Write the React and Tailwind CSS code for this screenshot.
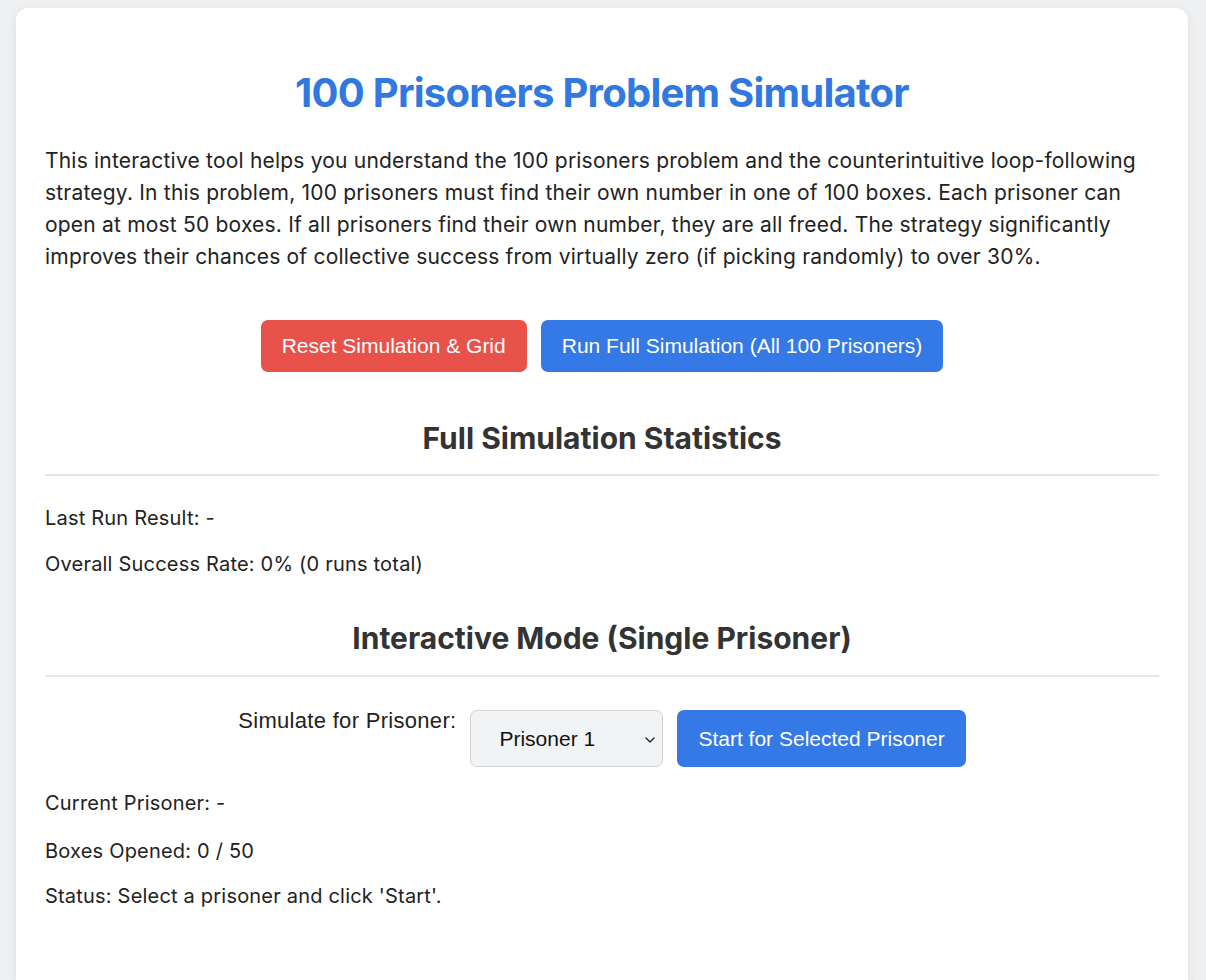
import React from "react";

export default function App() {
  const body = { fontFamily: "Inter, 'Noto Sans', sans-serif" };
  const btn = { fontFamily: "'Liberation Sans', Arial, sans-serif" };
  return (
    <div className="min-h-[980px] bg-[#eef0f2] pt-2 pl-4" style={body}>
      <div className="w-[1172px] bg-white rounded-xl shadow-[0_2px_10px_rgba(0,0,0,0.08)] px-[29px] pt-[61px] pb-[80px] text-[#222]">
        <h1 className="text-center text-[40px] leading-[48px] font-bold text-[#3178e0] tracking-[-0.75px]">
          100 Prisoners Problem Simulator
        </h1>
        <p className="mt-[28px] text-[21px] leading-[32px] tracking-[0.2px] text-[#222] whitespace-nowrap">
          This interactive tool helps you understand the 100 prisoners problem and the counterintuitive loop-following<br />
          strategy. In this problem, 100 prisoners must find their own number in one of 100 boxes. Each prisoner can<br />
          open at most 50 boxes. If all prisoners find their own number, they are all freed. The strategy significantly<br />
          improves their chances of collective success from virtually zero (if picking randomly) to over 30%.
        </p>
        <div className="mt-[47px] flex justify-center gap-[14px]" style={btn}>
          <button className="h-[52px] px-[21px] rounded-[7px] bg-[#e8524a] text-white text-[21px]">
            Reset Simulation &amp; Grid
          </button>
          <button className="h-[52px] px-[21px] rounded-[7px] bg-[#3479e6] text-white text-[21px]">
            Run Full Simulation (All 100 Prisoners)
          </button>
        </div>
        <h2 className="mt-[48px] text-center text-[30px] leading-[36px] font-bold text-[#333] pb-[18px] border-b-2 border-[#e6e6e6]">
          Full Simulation Statistics
        </h2>
        <div className="mt-[26px] text-[20px] leading-[32px] tracking-[0.2px] flex flex-col gap-[14px]">
          <div>Last Run Result: -</div>
          <div>Overall Success Rate: 0% (0 runs total)</div>
        </div>
        <h2 className="mt-[40px] text-center text-[30px] leading-[36px] font-bold text-[#333] pb-[19px] border-b-2 border-[#e6e6e6]">
          Interactive Mode (Single Prisoner)
        </h2>
        <div className="mt-[33px] flex justify-center items-start gap-[14px]">
          <span className="text-[22px] leading-[22px] tracking-[0.3px] text-[#222]" style={btn}>Simulate for Prisoner:</span>
          <div className="relative w-[193px] h-[57px] rounded-[7px] border border-[#cfd3d6] bg-[#f1f3f5] flex items-center pl-[28px]" style={btn}>
            <span className="text-[21px] text-[#111]">Prisoner 1</span>
            <svg className="absolute right-[6px] top-[23px]" width="12" height="12" viewBox="0 0 12 12" fill="none">
              <path d="M2 4 L6 8 L10 4" stroke="#222" strokeWidth="1.4" strokeLinecap="round" strokeLinejoin="round" />
            </svg>
          </div>
          <button className="h-[57px] px-[21px] rounded-[7px] bg-[#3479e6] text-white text-[21px]" style={btn}>
            Start for Selected Prisoner
          </button>
        </div>
        <div className="mt-[20px] text-[20px] leading-[32px] tracking-[0.2px] flex flex-col">
          <div>Current Prisoner: -</div>
          <div className="mt-[16px]">Boxes Opened: 0 / 50</div>
          <div className="mt-[13px]">Status: Select a prisoner and click 'Start'.</div>
        </div>
      </div>
    </div>
  );
}
